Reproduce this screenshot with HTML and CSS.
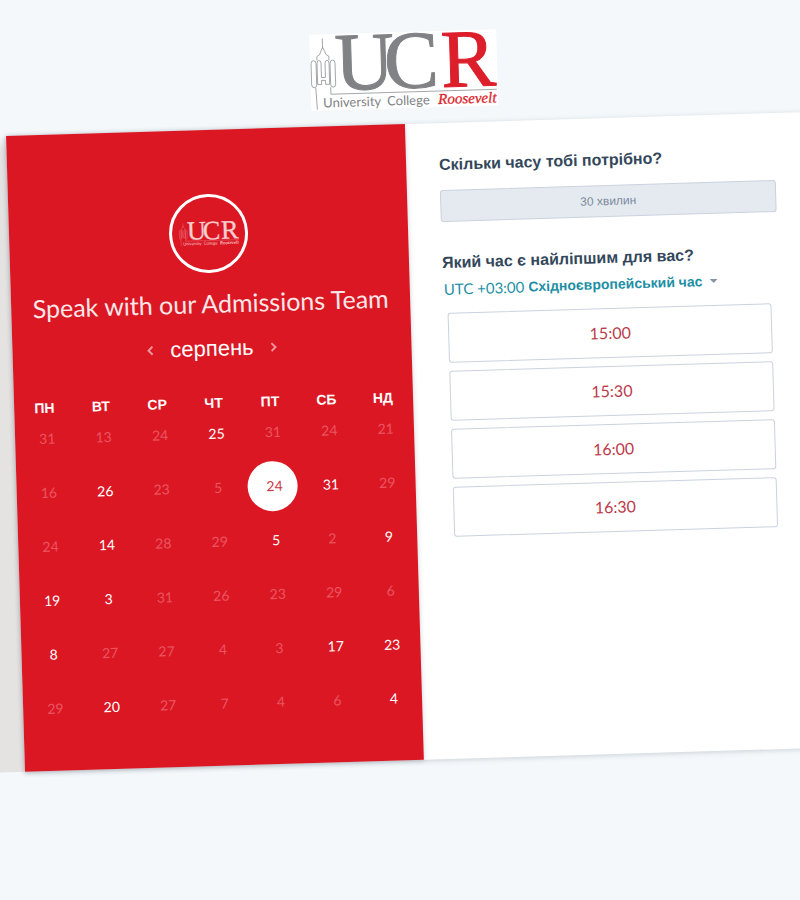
FILE: index.html
```html
<!DOCTYPE html>
<html lang="uk">
<head>
<meta charset="utf-8">
<meta name="viewport" content="width=device-width, initial-scale=1">
<title>Speak with our Admissions Team</title>
<link rel="stylesheet" href="styles.css">
</head>
<body>
<div class="stage">
  <header class="masthead">
    <svg class="logo" viewBox="0 0 187 76" role="img" aria-label="University College Roosevelt">
      <g id="ucr">
        <g class="tower">
          <path d="M13 4V14M13 13l-2 4-1 3-3 2v4M13 13l2 4 1 3 3 2v4"/>
          <path d="M1 29q0-3 2.500-3t2.500 3v21q0 3-2.500 3T1 50z"/>
          <path d="M20 29q0-3 2.500-3t2.500 3v21q0 3-2.500 3T20 50z"/>
          <path d="M7 50V29q0-3 2-3t2 3v14h4V29q0-3 2-3t2 3v21h-4v-4h-4v4z"/>
          <path d="M5 53l1 22M20 53v7h166"/>
        </g>
        <text class="mark" x="25" y="56">U</text>
        <text class="mark" x="74" y="56">C</text>
        <text class="mark accent" x="131" y="56">R</text>
        <text class="word" x="12" y="73">University</text>
        <text class="word" x="76" y="73">College</text>
        <text class="name accent" x="127" y="73">Roosevelt</text>
      </g>
    </svg>
  </header>

  <main class="card">
    <section class="calendar">
      <div class="avatar"><svg class="avatar-logo" viewBox="0 0 187 76" aria-hidden="true"><use href="#ucr"/></svg></div>
      <h1>Speak with our Admissions Team</h1>
      <div class="month">
        <button type="button" class="nav" aria-label="Попередній місяць"><svg viewBox="0 0 8 12"><path d="M6 2L2 6l4 4"/></svg></button>
        <h2>серпень</h2>
        <button type="button" class="nav" aria-label="Наступний місяць"><svg viewBox="0 0 8 12"><path d="M2 2l4 4-4 4"/></svg></button>
      </div>
      <table class="days">
        <thead>
          <tr><th>ПН</th><th>ВТ</th><th>СР</th><th>ЧТ</th><th>ПТ</th><th>СБ</th><th>НД</th></tr>
        </thead>
        <tbody>
          <tr><td><button disabled>31</button></td><td><button disabled>13</button></td><td><button disabled>24</button></td><td><button>25</button></td><td><button disabled>31</button></td><td><button disabled>24</button></td><td><button disabled>21</button></td></tr>
          <tr><td><button disabled>16</button></td><td><button>26</button></td><td><button disabled>23</button></td><td><button disabled>5</button></td><td><button class="selected" aria-pressed="true">24</button></td><td><button>31</button></td><td><button disabled>29</button></td></tr>
          <tr><td><button disabled>24</button></td><td><button>14</button></td><td><button disabled>28</button></td><td><button disabled>29</button></td><td><button>5</button></td><td><button disabled>2</button></td><td><button>9</button></td></tr>
          <tr><td><button>19</button></td><td><button>3</button></td><td><button disabled>31</button></td><td><button disabled>26</button></td><td><button disabled>23</button></td><td><button disabled>29</button></td><td><button disabled>6</button></td></tr>
          <tr><td><button>8</button></td><td><button disabled>27</button></td><td><button disabled>27</button></td><td><button disabled>4</button></td><td><button disabled>3</button></td><td><button>17</button></td><td><button>23</button></td></tr>
          <tr><td><button disabled>29</button></td><td><button>20</button></td><td><button disabled>27</button></td><td><button disabled>7</button></td><td><button disabled>4</button></td><td><button disabled>6</button></td><td><button>4</button></td></tr>
        </tbody>
      </table>
    </section>

    <section class="booking">
      <h3>Скільки часу тобі потрібно?</h3>
      <button type="button" class="duration">30 хвилин</button>
      <h3>Який час є найліпшим для вас?</h3>
      <div class="zone">
        <label for="zone">UTC +03:00</label>
        <select id="zone"><option>Східноєвропейський час</option></select>
        <svg class="caret" viewBox="0 0 8 4" aria-hidden="true"><path d="M0 0h8L4 4z"/></svg>
      </div>
      <div class="slots">
        <button type="button">15:00</button>
        <button type="button">15:30</button>
        <button type="button">16:00</button>
        <button type="button">16:30</button>
      </div>
    </section>
  </main>
</div>
</body>
</html>
```
FILE: styles.css
```css
* {
  box-sizing: border-box;
}

body {
  --red: #dc1724;
  --line: #cbd2de;
  margin: 0;
  min-height: 100vh;
  overflow: hidden;
  background: #f4f8fb;
  color: #33475b;
  font-family: Lato, "Liberation Sans", sans-serif;
}

h1, h2, h3 {
  margin: 0;
}

button, select {
  margin: 0;
  padding: 0;
  border: 0;
  background: none;
  color: inherit;
  font: inherit;
}

/* The whole sheet is tilted as one piece. */
.stage {
  margin-left: 2px;
  transform: rotate(-1.71deg);
  transform-origin: 0 0;
}

.masthead {
  display: flex;
  justify-content: center;
  padding: 44px 0 16px;
}

.logo {
  width: 187px;
  height: 76px;
  overflow: visible;
  background: #fff;
  --ink: #808285;
  --accent: #dc1f2b;
}

.tower {
  fill: none;
  stroke: var(--ink);
  stroke-width: 0.7;
}

.mark, .word, .name {
  fill: var(--ink);
}

.mark {
  font: 82px "Liberation Serif", serif;
  stroke: var(--ink);
  stroke-width: 1;
}

.mark.accent {
  stroke: var(--accent);
}

.word {
  font: 13px Lato, sans-serif;
}

.name {
  font: italic 15px "Liberation Serif", serif;
  stroke: var(--accent);
  stroke-width: 0.3;
}

.accent {
  fill: var(--accent);
}

.card {
  position: relative;
  display: grid;
  grid-template-columns: 1fr 1fr;
  min-height: 636px;
  background: #fff;
  box-shadow: 0 1px 5px rgba(80, 90, 100, 0.25);
}

/* Grey margin showing beside the card. */
.card::before {
  content: "";
  position: absolute;
  z-index: -1;
  top: 0;
  bottom: 0;
  right: 100%;
  width: 40px;
  background: linear-gradient(transparent, #e5e2e2 14px);
}

.calendar {
  display: flex;
  flex-direction: column;
  align-items: center;
  padding: 64px 2px 26px;
  background: var(--red);
  box-shadow: 0 1px 5px rgba(60, 70, 80, 0.25);
  color: #fff;
}

.avatar {
  display: flex;
  align-items: center;
  justify-content: center;
  width: 79px;
  height: 79px;
  border: 3px solid #fff;
  border-radius: 50%;
}

.avatar-logo {
  width: 60px;
  height: 25px;
  overflow: visible;
}

.avatar-logo use {
  --ink: #f6cdd0;
  --accent: #f6cdd0;
}

h1 {
  margin-top: 14px;
  font-size: 25px;
  font-weight: 400;
  line-height: 32px;
  color: #fbe6e8;
}

.month {
  display: flex;
  align-items: center;
  gap: 16px;
  margin-top: 16px;
}

.month h2 {
  font: 22px/28px "Liberation Sans", sans-serif;
}

.nav {
  display: flex;
  width: 8px;
  height: 12px;
}

.nav svg {
  fill: none;
  stroke: #f0949b;
  stroke-width: 2;
}

.days {
  width: 100%;
  margin-top: 28px;
  border-collapse: collapse;
  table-layout: fixed;
  text-align: center;
}

.days th {
  height: 24px;
  padding: 0;
  font: bold 14px/24px "Liberation Sans", sans-serif;
}

.days td {
  height: 54px;
  padding: 0;
  vertical-align: top;
}

.days button {
  position: relative;
  display: block;
  width: 100%;
  height: 37px;
  padding-left: 4px;
  font-size: 14px;
  line-height: 37px;
  z-index: 0;
}

.days button:disabled {
  color: #ea5560;
}

.days .selected {
  color: #c93a48;
}

.selected::before {
  content: "";
  position: absolute;
  z-index: -1;
  top: 50%;
  left: 50%;
  width: 50px;
  height: 50px;
  border-radius: 50%;
  background: #fff;
  transform: translate(-50%, -50%);
}

.booking {
  padding: 30px 30px 30px 33px;
}

h3 {
  font: bold 16px/24px "Liberation Sans", sans-serif;
}

.duration {
  display: block;
  width: 100%;
  height: 32px;
  margin: 13px 0 29px;
  border: 1px solid var(--line);
  border-radius: 3px;
  background: #e5eaf0;
  color: #7c8a9e;
  font: 12px "Liberation Sans", sans-serif;
}

.zone {
  display: flex;
  align-items: center;
  gap: 4px;
  height: 28px;
  padding-left: 1px;
  color: #1d8fa5;
  font-size: 15px;
}

.zone select {
  appearance: none;
  font: bold 14px/20px "Liberation Sans", sans-serif;
}

.caret {
  width: 8px;
  height: 4px;
  margin-left: 2px;
  fill: #8493a8;
}

.slots {
  display: grid;
  gap: 8px;
  margin: 10px 8px 0 4px;
}

.slots button {
  height: 50px;
  padding-bottom: 2px;
  border: 1px solid var(--line);
  border-radius: 3px;
  color: #bb3a4a;
  font-size: 16px;
}
```
